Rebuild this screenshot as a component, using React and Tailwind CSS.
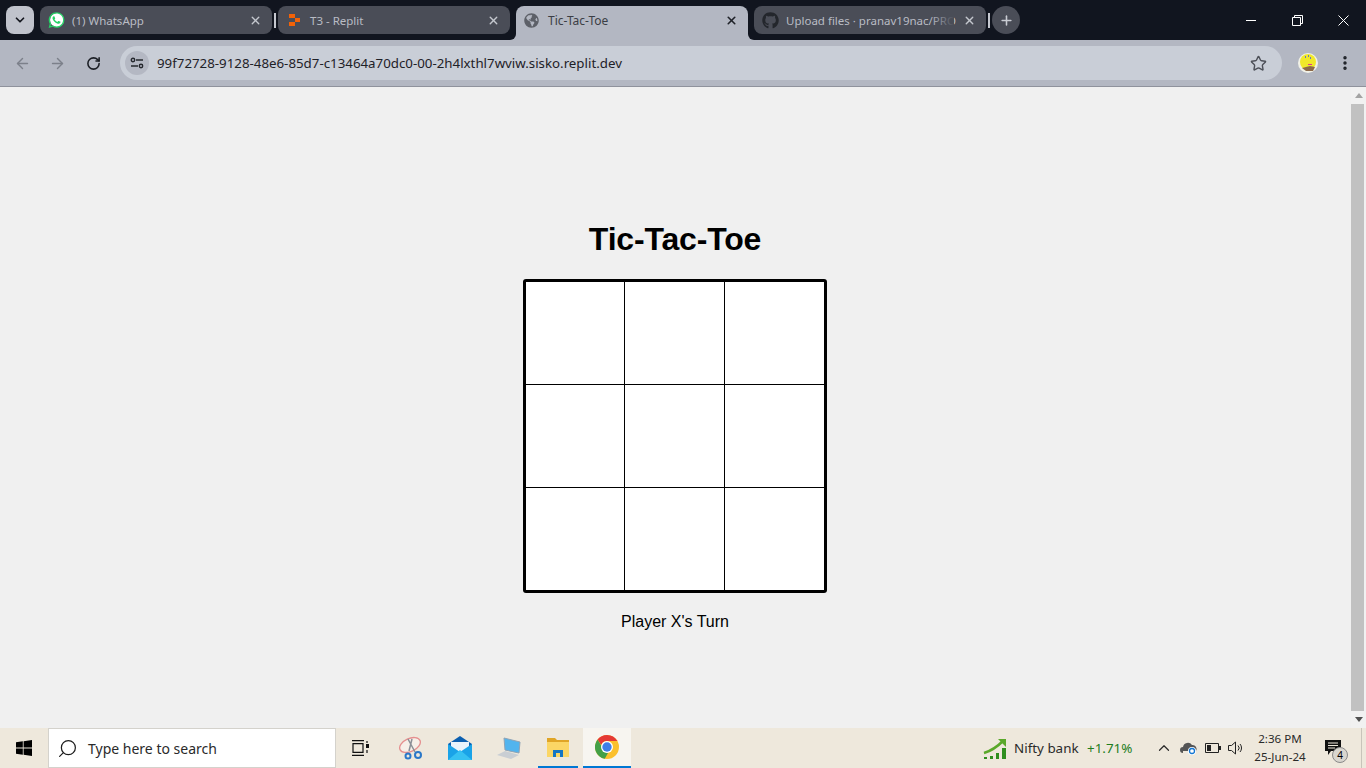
import { ArrowLeft, ArrowRight, ChevronDown, ChevronUp, EllipsisVertical, Plus, RotateCw, Search, Star, X } from 'lucide-react';
import { FaGithub, FaGlobeAmericas, FaWhatsapp } from 'react-icons/fa';

const uiFont = "font-['Noto_Sans',sans-serif]";

function ReplitLogo() {
    return (
        <svg className="ml-[3px]" width="12" height="12" viewBox="0 0 12 12">
            <path d="M0 0h6v4H0zM6 4h5v4H6zM0 8h6v4H0z" fill="#f26207" />
        </svg>
    );
}

function WhatsAppLogo() {
    return (
        <span className="relative flex h-[17px] w-[17px] items-center justify-center">
            <span className="absolute h-[14px] w-[14px] rounded-full bg-white" />
            <FaWhatsapp size={18} className="relative text-[#25d366]" />
        </span>
    );
}

function Tab({ icon, title, fade }) {
    return (
        <div className="relative flex h-7 w-[232px] shrink-0 items-center rounded-lg bg-[#4a4d57] pl-2 pr-[10px]">
            <span className="flex w-6 shrink-0 justify-start">{icon}</span>
            <span className="whitespace-nowrap pt-px text-[11.5px] text-[#b9bcc4]">{title}</span>
            {fade && <span className="absolute left-[176px] top-1 h-5 w-[24px] bg-gradient-to-r from-transparent to-[#4a4d57]" />}
            <X size={13} strokeWidth={2.5} className="ml-auto text-[#c4c7ce]" />
        </div>
    );
}

function TabSep() {
    return <div className="mx-[2px] h-[15px] w-[2px] shrink-0 bg-[#c5c8cf]" />;
}

function TabStrip() {
    return (
        <div className={`flex h-10 shrink-0 items-start bg-[#11151f] pl-[6px] pt-[6px] ${uiFont}`}>
            <div className="flex h-7 w-7 shrink-0 items-center justify-center rounded-lg bg-[#c0c3cc]">
                <ChevronDown size={14} strokeWidth={3} className="text-[#14171f]" />
            </div>
            <div className="ml-[6px]">
                <Tab icon={<WhatsAppLogo />} title="(1) WhatsApp" />
            </div>
            <div className="mt-[7px]"><TabSep /></div>
            <Tab icon={<ReplitLogo />} title="T3 - Replit" />
            {/* active tab runs down into the toolbar */}
            <div className="relative ml-[6px] flex h-[40px] w-[232px] shrink-0 items-start rounded-t-lg bg-[#b3b7c2] pl-2 pr-[10px] pt-[7px]">
                <span className="absolute -left-[6px] top-[28px] h-[6px] w-[6px] bg-[#b3b7c2]">
                    <span className="block h-full w-full rounded-br-[6px] bg-[#11151f]" />
                </span>
                <span className="absolute -right-[6px] top-[28px] h-[6px] w-[6px] bg-[#b3b7c2]">
                    <span className="block h-full w-full rounded-bl-[6px] bg-[#11151f]" />
                </span>
                <FaGlobeAmericas size={15} className="text-[#5d6068]" />
                <span className="ml-[9px] text-xs text-[#3b3e45]">Tic-Tac-Toe</span>
                <X size={13} strokeWidth={3} className="ml-auto mt-[1px] text-[#1f2228]" />
            </div>
            <div className="ml-[6px]">
                <Tab icon={<FaGithub size={17} className="text-[#23262c]" />} title="Upload files · pranav19nac/PRO" fade />
            </div>
            <div className="mt-[7px]"><TabSep /></div>
            <div className="flex h-7 w-7 shrink-0 items-center justify-center rounded-full bg-[#4a4d57]">
                <Plus size={15} strokeWidth={2.5} className="text-[#c9ccd3]" />
            </div>
            <div className="ml-auto flex h-10 -translate-y-[6px] items-center text-white">
                <div className="flex w-[46px] justify-center"><div className="h-px w-[10px] bg-white" /></div>
                <div className="flex w-[46px] justify-center">
                    <svg width="11" height="11" viewBox="0 0 11 11" fill="none" stroke="currentColor">
                        <path d="M.5 2.500h8v8h-8zM2.500 2.500v-2h8v8h-2" />
                    </svg>
                </div>
                <div className="flex w-[46px] justify-center">
                    <svg width="11" height="11" viewBox="0 0 11 11" stroke="currentColor"><path d="M.5.5l10 10M10.500.5l-10 10" /></svg>
                </div>
            </div>
        </div>
    );
}

function Avatar() {
    return (
        <svg width="20" height="20" viewBox="0 0 20 20">
            <circle cx="10" cy="10" r="10" fill="#f1f1e6" />
            <circle cx="10" cy="9" r="8" fill="#f1e92a" />
            <path d="M4 15l8-2 5 1-2 4H8z" fill="#8c6a4a" />
            <path d="M10 11h4v1h-4z" fill="#e0359c" />
            <path d="M7 3h1v2H7zM10 2h1v2h-1zM12 4h1v2h-1z" fill="#6c7ab8" />
        </svg>
    );
}

function Toolbar() {
    return (
        <div className={`flex h-[47px] shrink-0 items-start border-b border-[#8f929c] bg-[#b3b7c2] pt-[6px] ${uiFont}`}>
            <div className="flex h-[34px] w-[120px] shrink-0 items-center pl-[14px]">
                <ArrowLeft size={17} className="text-[#7c808a]" />
                <ArrowRight size={17} className="ml-[18px] text-[#7c808a]" />
                <RotateCw size={15} strokeWidth={2.5} className="ml-[20px] text-[#1c1f25]" />
            </div>
            <div className="flex h-[34px] w-[1162px] shrink-0 items-center rounded-full bg-[#c9ced7] pl-[5px] pr-[15px]">
                <div className="flex h-6 w-6 items-center justify-center rounded-full bg-[#b4b8c3]">
                    <svg width="14" height="12" viewBox="0 0 14 12" fill="none" stroke="#25282e" strokeWidth="1.4">
                        <path d="M6 3h7M1 9h7" />
                        <circle cx="3" cy="3" r="1.7" />
                        <circle cx="11" cy="9" r="1.7" />
                    </svg>
                </div>
                <span className="ml-[8px] pt-px text-[13.3px] text-[#1e2127]">99f72728-9128-48e6-85d7-c13464a70dc0-00-2h4lxthl7wviw.sisko.replit.dev</span>
                <Star size={17} strokeWidth={2} className="ml-auto text-[#4d5058]" />
            </div>
            <div className="ml-[16px] flex h-[34px] items-center"><Avatar /></div>
            <div className="ml-[18px] flex h-[34px] items-center"><EllipsisVertical size={18} strokeWidth={2.6} className="text-[#1c1f25]" /></div>
        </div>
    );
}

function Board() {
    const cell = 'bg-white border-black';
    return (
        <div className="mt-[21px] grid grid-cols-[99px_100px_99px] grid-rows-[103px_103px_102px] rounded-[3px] border-[3px] border-black bg-white">
            <div className={`${cell} border-r border-b`} />
            <div className={`${cell} border-r border-b`} />
            <div className={`${cell} border-b`} />
            <div className={`${cell} border-r border-b`} />
            <div className={`${cell} border-r border-b`} />
            <div className={`${cell} border-b`} />
            <div className={`${cell} border-r`} />
            <div className={`${cell} border-r`} />
            <div className={cell} />
        </div>
    );
}

function Scrollbar() {
    return (
        <div className="flex w-[15px] shrink-0 flex-col bg-[#f1f1f1]">
            <div className="flex h-[17px] shrink-0 items-center justify-center">
                <div className="h-0 w-0 border-x-4 border-b-[5px] border-x-transparent border-b-[#a3a3a3]" />
            </div>
            <div className="w-[13px] flex-1 bg-[#c1c1c1]" />
            <div className="flex h-[17px] shrink-0 items-center justify-center">
                <div className="h-0 w-0 border-x-4 border-t-[5px] border-x-transparent border-t-[#505050]" />
            </div>
        </div>
    );
}

function ChromeIcon() {
    return (
        <svg width="24" height="24" viewBox="0 0 24 24">
            <circle cx="12" cy="12" r="12" fill="#fbc02d" />
            <path d="M12 0a12 12 0 0 1 10.4 6H12a6 6 0 0 0-5.700 4L2.600 4.500A12 12 0 0 1 12 0z" fill="#e53935" />
            <path d="M2.600 4.500L8 13.500a6 6 0 0 0 5 4.400L9.800 23.800A12 12 0 0 1 2.600 4.500z" fill="#43a047" />
            <circle cx="12" cy="12" r="6" fill="#fff" />
            <circle cx="12" cy="12" r="4.700" fill="#3f7fe8" />
        </svg>
    );
}

function Taskbar() {
    return (
        <div className={`flex h-10 shrink-0 items-stretch bg-[#eee8dc] ${uiFont}`}>
            <div className="flex w-12 shrink-0 items-center justify-center">
                <svg width="16" height="16" viewBox="0 0 16 16" fill="#000">
                    <path d="M0 2.300l6.800-1v6.300H0zM7.600 1.200L16 0v7.600H7.600zM0 8.400h6.800v6.300l-6.800-1zM7.600 8.400H16V16l-8.400-1.200z" />
                </svg>
            </div>
            <div className="flex w-[288px] shrink-0 items-center border border-[#d4d2cc] bg-white pl-2">
                <Search size={21} strokeWidth={1.4} className="-scale-x-100 text-[#1c1c1c]" />
                <span className="ml-[10px] pt-px text-sm text-[#2a2a2a]">Type here to search</span>
            </div>
            <div className="flex w-[48px] shrink-0 items-center justify-center">
                <svg width="17" height="16" viewBox="0 0 17 16" fill="none" stroke="#111" strokeWidth="1.200">
                    <path d="M0 .6h12M0 15.400h12M1 3.600h10v8.800H1z" />
                    <path d="M14 4h3v4h-3z" fill="#111" stroke="none" />
                    <path d="M15 1v2M15 10v3" />
                </svg>
            </div>
            {/* snip */}
            <div className="ml-[3px] flex w-[48px] shrink-0 items-center justify-center">
                <svg width="24" height="24" viewBox="0 0 24 24" fill="none">
                    <ellipse cx="11" cy="9" rx="11" ry="6.500" transform="rotate(-25 11 9)" fill="#f6efe8" stroke="#e58f8f" strokeWidth="1.300" />
                    <path d="M9 3l7 13M13 3l-3 12" stroke="#8a8f96" strokeWidth="1.500" />
                    <circle cx="19" cy="19" r="3" stroke="#2b78c9" strokeWidth="2" />
                    <circle cx="9" cy="20" r="2.500" stroke="#2b78c9" strokeWidth="2" />
                </svg>
            </div>
            <div className="ml-px flex w-[48px] shrink-0 items-center justify-center">
                <svg width="24" height="24" viewBox="0 0 24 24">
                    <path d="M0 8L12 0l12 8v3H0z" fill="#0b5fb0" />
                    <path d="M3 6h18v9H3z" fill="#e8f3fb" />
                    <path d="M0 8l12 8 12-8v16H0z" fill="#1aa3e8" />
                    <path d="M0 24L12 14l12 10z" fill="#36c1f2" />
                </svg>
            </div>
            <div className="ml-px flex w-[48px] shrink-0 items-center justify-center">
                <svg width="24" height="24" viewBox="0 0 24 24">
                    <path d="M7 2l16 4-1 11-14-3z" fill="#52b4ee" stroke="#8fa3b5" />
                    <path d="M0 19l8-4 14 4-8 4z" fill="#c9ced3" />
                </svg>
            </div>
            <div className="ml-[5px] flex w-[40px] shrink-0 items-center justify-center border-b-[2px] border-[#0078d4]">
                <svg width="22" height="20" viewBox="0 0 22 20">
                    <path d="M0 1h8l2 2h12v4H0z" fill="#e0a526" />
                    <path d="M0 5h22v15H0z" fill="#fbd665" />
                    <path d="M6 13h10v7h-3v-4H9v4H6z" fill="#1576c4" />
                </svg>
            </div>
            <div className="ml-[5px] flex w-12 shrink-0 items-center justify-center border-b-[2px] border-[#0078d4] bg-[#f7f5f0]">
                <ChromeIcon />
            </div>
            <div className="ml-auto flex shrink-0 items-center text-[13.4px] text-[#2a2a2a]">
                <svg width="24" height="24" viewBox="0 0 24 24" fill="none">
                    <path d="M1 17Q11 14 20 5" stroke="#5aa82a" strokeWidth="2.500" />
                    <path d="M15 3h8v8z" fill="#5aa82a" />
                    <path d="M1 21h3v2H1zM7 20h3v3H7zM13 17h3v6h-3zM19 12h4v11h-4z" fill="#2f8f1f" />
                </svg>
                <span className="ml-[7px] w-[73px] pt-px">Nifty bank</span>
                <span className="w-[68px] pt-px text-[#1e7d1e]">+1.71%</span>
                <ChevronUp size={18} strokeWidth={1.600} />
                <svg className="ml-[7px]" width="18" height="14" viewBox="0 0 18 14">
                    <path d="M3 12a3 3 0 0 1 0-6 5 5 0 0 1 9-2 4 4 0 0 1 4 6H3z" fill="#555" />
                    <circle cx="12" cy="10" r="4" fill="#fff" />
                    <path d="M9.500 10a2.500 2.500 0 0 1 5 0M14.500 10a2.500 2.500 0 0 1-5 0" stroke="#1376d3" strokeWidth="1.300" fill="none" />
                </svg>
                <svg className="ml-[7px]" width="16" height="10" viewBox="0 0 16 10" fill="none">
                    <path d="M.5.500h13v9H.5z" stroke="#222" />
                    <path d="M2 2h4v6H2zM14 3h2v4h-2z" fill="#222" />
                </svg>
                <svg className="ml-[7px]" width="16" height="14" viewBox="0 0 16 14" fill="none" stroke="#222">
                    <path d="M.5 4.500h3l4-3.500v12l-4-3.500h-3z" />
                    <path d="M10 4.500a3.500 3.500 0 0 1 0 5M12 3a6 6 0 0 1 0 8" />
                </svg>
                <div className="ml-[2px] flex w-[68px] flex-col items-center text-[11.6px] leading-[18px]">
                    <span>2:36 PM</span>
                    <span>25-Jun-24</span>
                </div>
                <div className="relative ml-[11px] mr-[16px] h-10 w-[20px]">
                    <svg className="mt-[12px]" width="16" height="15" viewBox="0 0 16 15">
                        <path d="M0 0h16v11H6l-3 4v-4H0z" fill="#111" />
                        <path d="M3 3h10M3 5.500h10M3 8h7" stroke="#eee8dc" />
                    </svg>
                    <span className="absolute left-[7px] top-[19px] flex h-[16px] w-[16px] items-center justify-center rounded-full border border-[#8a8a8a] bg-[#d9d6cf] text-[10px] text-black">4</span>
                </div>
                <div className="mr-[4px] h-full w-px bg-[#c8c4ba]" />
            </div>
        </div>
    );
}

export default function App() {
    return (
        <div className="flex h-screen flex-col overflow-hidden bg-[#f0f0f0]">
            <TabStrip />
            <Toolbar />
            <div className="flex min-h-0 flex-1">
                <main className="flex flex-1 flex-col items-center pr-px pt-[134px] font-['Liberation_Sans',sans-serif]">
                    <h1 className="text-[32px] font-bold leading-[37px] tracking-[-0.18px] text-black">Tic-Tac-Toe</h1>
                    <Board />
                    <p className="mt-[20px] text-base leading-[18px] text-black">Player X's Turn</p>
                </main>
                <Scrollbar />
            </div>
            <Taskbar />
        </div>
    );
}
